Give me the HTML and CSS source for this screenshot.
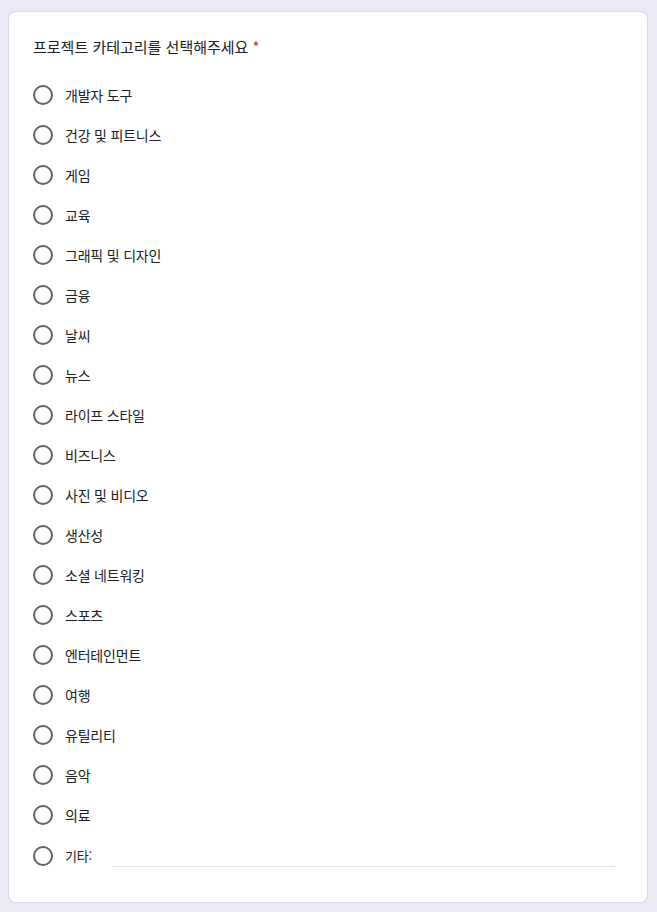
FILE: index.html
```html
<!DOCTYPE html>
<html lang="ko">
<head>
<meta charset="utf-8">
<link rel="stylesheet" href="styles.css">
</head>
<body>
<div class="card">
  <div class="title">프로젝트 카테고리를 선택해주세요 <span class="req">*</span></div>
  <div class="list">
    <label class="row"><span class="radio"></span><span class="lbl">개발자 도구</span></label>
    <label class="row"><span class="radio"></span><span class="lbl">건강 및 피트니스</span></label>
    <label class="row"><span class="radio"></span><span class="lbl">게임</span></label>
    <label class="row"><span class="radio"></span><span class="lbl">교육</span></label>
    <label class="row"><span class="radio"></span><span class="lbl">그래픽 및 디자인</span></label>
    <label class="row"><span class="radio"></span><span class="lbl">금융</span></label>
    <label class="row"><span class="radio"></span><span class="lbl">날씨</span></label>
    <label class="row"><span class="radio"></span><span class="lbl">뉴스</span></label>
    <label class="row"><span class="radio"></span><span class="lbl">라이프 스타일</span></label>
    <label class="row"><span class="radio"></span><span class="lbl">비즈니스</span></label>
    <label class="row"><span class="radio"></span><span class="lbl">사진 및 비디오</span></label>
    <label class="row"><span class="radio"></span><span class="lbl">생산성</span></label>
    <label class="row"><span class="radio"></span><span class="lbl">소셜 네트워킹</span></label>
    <label class="row"><span class="radio"></span><span class="lbl">스포츠</span></label>
    <label class="row"><span class="radio"></span><span class="lbl">엔터테인먼트</span></label>
    <label class="row"><span class="radio"></span><span class="lbl">여행</span></label>
    <label class="row"><span class="radio"></span><span class="lbl">유틸리티</span></label>
    <label class="row"><span class="radio"></span><span class="lbl">음악</span></label>
    <label class="row"><span class="radio"></span><span class="lbl">의료</span></label>
    <div class="row other"><span class="radio"></span><span class="lbl small">기타:</span><span class="line"></span></div>
  </div>
</div>
</body>
</html>
```

FILE: styles.css
```css
html, body {
  margin: 0;
  padding: 0;
  background: #ede8f6;
}
body {
  padding: 11px 9px 0 8px;
  font-family: "Noto Sans CJK KR", "Noto Sans", sans-serif;
  color: #202124;
}
.card {
  width: 640px;
  background: #fff;
  border: 1px solid #dadce0;
  border-radius: 8px;
  padding: 23px 0 24px 24px;
  box-sizing: border-box;
  height: 892px;
}
.title {
  font-size: 15px;
  line-height: 24px;
  letter-spacing: 0;
  color: #202124;
}
.req {
  color: #d93025;
}
.list {
  margin-top: 16px;
  display: flex;
  flex-direction: column;
}
.row {
  display: flex;
  align-items: center;
  height: 40px;
}
.radio {
  width: 20px;
  height: 20px;
  border: 2px solid #5f6368;
  border-radius: 50%;
  box-sizing: border-box;
  flex: none;
}
.lbl {
  margin-left: 12px;
  font-size: 14px;
  line-height: 20px;
  letter-spacing: -0.2px;
  color: #202124;
}
.row.other {
  height: 42px;
  align-items: center;
}
.lbl.small {
  font-size: 13px;
}
.line {
  display: block;
  width: 503px;
  margin-left: 20px;
  height: 1px;
  background: #e0e0e0;
  align-self: flex-end;
  margin-bottom: 10px;
}
```
